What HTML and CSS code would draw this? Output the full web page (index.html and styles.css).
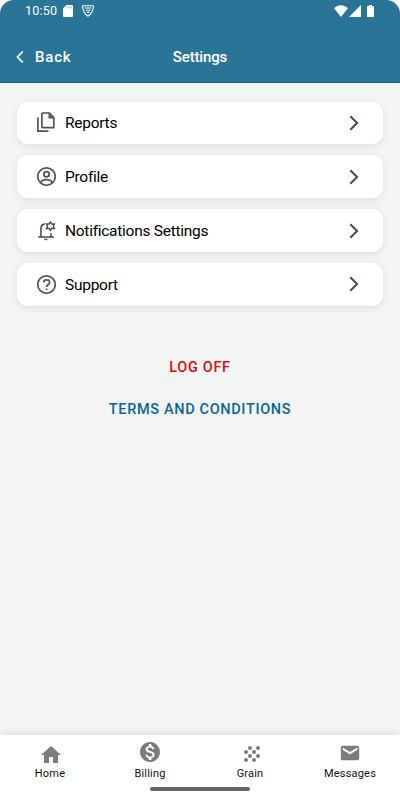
FILE: index.html
```html
<!DOCTYPE html>
<html lang="en">
<head>
    <meta charset="UTF-8">
    <meta name="viewport" content="width=device-width, initial-scale=1.0">
    <title>Settings</title>
    <link rel="stylesheet" href="styles.css">
</head>

<body>
    <div class="screen">
        <header>
            <div class="status-bar">
                <span class="time">10:50</span>
                <svg class="sd-card" width="10" height="12" viewBox="0 0 10 12">
                    <path d="M3.6 0H9a1 1 0 0 1 1 1v10a1 1 0 0 1-1 1H1a1 1 0 0 1-1-1V3.600z" fill="#fff"/>
                    <path d="M4 1.400v2M6 1.400v2M8 1.400v2" stroke="#8fb3c6" stroke-width="1"/>
                </svg>
                <svg class="shield" width="12" height="12" viewBox="0 0 12 12" fill="none" stroke="#fff">
                    <path d="M1.400.8h9.200q.9 0 .8.900C11 5.300 9.300 9 6 11.300 2.700 9 1 5.300.6 1.700.5.800.8.800 1.400.8z" stroke-width="1.100"/>
                    <path d="M2.800 3h6.400M3.800 5.200h4.600M5 7.400h2.400" stroke-width="1.100"/>
                </svg>
                <div class="status-right">
                    <svg width="14" height="12" viewBox="0 0 14 12"><path d="M0 3.200C3.800-.9 10.200-.9 14 3.200L7 12z" fill="#fff"/></svg>
                    <svg class="signal" width="12" height="12" viewBox="0 0 12 12"><path d="M12 0v12H0z" fill="#fff"/></svg>
                    <svg class="battery" width="7" height="12" viewBox="0 0 7 12"><path d="M2 0h3v1h1.300q.7 0 .7.700v9.600q0 .7-.7.700H.7q-.7 0-.7-.7V1.700Q0 1 .7 1H2z" fill="#fff"/></svg>
                </div>
            </div>
            <div class="title-bar">
                <a class="back" href="#">
                    <svg width="8" height="12" viewBox="0 0 8 12"><path d="M6.800.6 1.400 6l5.400 5.400" fill="none" stroke="#fff" stroke-width="1.600"/></svg>
                    <span>Back</span>
                </a>
                <h1>Settings</h1>
            </div>
        </header>

        <main>
            <ul class="menu">
                <li class="menu-item">
                    <svg class="menu-icon" viewBox="0 0 21 21">
                        <path d="M6.900 1h6.600l4.300 4.500v10.200H6.900q-1 0-1-1V2q0-1 1-1zM1.900 5.500v13.600h10.600" fill="none" stroke="#50554c" stroke-width="1.700"/>
                        <path d="M12.500 1v5.600h5.300z"/>
                    </svg>
                    <span>Reports</span>
                    <svg class="chevron" viewBox="0 0 10 16"><path d="m1.300 1.200 6.800 6.800-6.800 6.800"/></svg>
                </li>
                <li class="menu-item">
                    <svg class="menu-icon outline" viewBox="0 0 24 24"><circle cx="12" cy="12" r="10"/><circle cx="12" cy="9.300" r="3"/><path d="M5 18.800c1.800-2.100 4.200-3.100 7-3.100s5.200 1 7 3.100"/></svg>
                    <span>Profile</span>
                    <svg class="chevron" viewBox="0 0 10 16"><path d="m1.300 1.200 6.800 6.800-6.800 6.800"/></svg>
                </li>
                <li class="menu-item">
                    <svg class="menu-icon bell" viewBox="0 0 20 20">
                        <path d="M2 16.200h15M4.700 16V8.500c0-2.500 1.200-4.200 3.600-4.800M14.300 12.500V16" fill="none" stroke="#444b41" stroke-width="1.500"/>
                        <path d="M7.600 17.800h3.600c-.4 2-3.200 2-3.600 0z"/>
                        <path d="m13.700 1.800 1.300 2 2.500-.1-1.100 2.200 1.100 2.200-2.500-.1-1.300 2-1.300-2-2.500.1L11 5.900 9.900 3.700l2.500.1z" fill="none" stroke="#444b41" stroke-width="1.300"/>
                    </svg>
                    <span>Notifications Settings</span>
                    <svg class="chevron" viewBox="0 0 10 16"><path d="m1.300 1.200 6.800 6.800-6.800 6.800"/></svg>
                </li>
                <li class="menu-item">
                    <svg class="menu-icon outline" viewBox="0 0 24 24"><circle cx="12" cy="12" r="10"/><path d="M8.700 9.800c0-4.200 6.800-4.200 6.800-.2 0 2.600-3.400 2.700-3.400 5.300M12.100 16.600v2.100"/></svg>
                    <span>Support</span>
                    <svg class="chevron" viewBox="0 0 10 16"><path d="m1.300 1.200 6.800 6.800-6.800 6.800"/></svg>
                </li>
            </ul>

            <div class="links">
                <a class="log-off" href="#">LOG OFF</a>
                <a class="terms" href="#">TERMS AND CONDITIONS</a>
            </div>
        </main>

        <nav>
            <a href="#">
                <svg class="home" viewBox="0 0 24 24"><path d="M10 20v-6h4v6h5v-8h3L12 3 2 12h3v8z"/></svg>
                <span>Home</span>
            </a>
            <a href="#">
                <svg class="billing" viewBox="0 0 24 24"><path d="M12 2C6.480 2 2 6.480 2 12s4.480 10 10 10 10-4.480 10-10S17.520 2 12 2zm1.410 16.090V20h-2.670v-1.930c-1.710-.36-3.160-1.460-3.270-3.400h1.960c.1 1.050.82 1.870 2.650 1.870 1.960 0 2.400-.98 2.400-1.590 0-.83-.44-1.610-2.670-2.140-2.480-.6-4.180-1.620-4.180-3.670 0-1.720 1.390-2.840 3.110-3.210V4h2.670v1.950c1.860.45 2.790 1.860 2.850 3.390H14.300c-.05-1.110-.64-1.870-2.220-1.870-1.500 0-2.400.68-2.400 1.640 0 .84.65 1.390 2.670 1.910s4.180 1.390 4.180 3.910c-.01 1.830-1.380 2.830-3.120 3.160z"/></svg>
                <span>Billing</span>
            </a>
            <a href="#">
                <svg class="grain" viewBox="0 0 24 24">
                    <circle cx="14" cy="6" r="2"/><circle cx="22" cy="6" r="2"/>
                    <circle cx="10" cy="10" r="2"/><circle cx="18" cy="10" r="2"/>
                    <circle cx="14" cy="14" r="2"/><circle cx="22" cy="14" r="2"/>
                    <circle cx="10" cy="18" r="2"/><circle cx="18" cy="18" r="2"/>
                </svg>
                <span>Grain</span>
            </a>
            <a href="#">
                <svg class="messages" viewBox="0 0 24 24"><path d="M20 4H4c-1.100 0-2 .9-2 2v12c0 1.100.9 2 2 2h16c1.100 0 2-.9 2-2V6c0-1.100-.9-2-2-2zm0 4.500-8 5-8-5V6l8 5 8-5z"/></svg>
                <span>Messages</span>
            </a>
        </nav>
        <div class="home-bar"></div>
    </div>
</body>
</html>
```
FILE: styles.css
```css
body {
    margin: 0;
    background-color: #fff;
    font-family: Roboto, sans-serif;
}

a {
    text-decoration: none;
    color: inherit;
}

svg {
    display: block;
    flex-shrink: 0;
    overflow: visible;
}

.screen {
    position: relative;
    display: flex;
    flex-direction: column;
    width: 400px;
    height: 800px;
    overflow: hidden;
    border-radius: 14px 14px 0 0;
    background-color: #f3f5f5;
}

header {
    height: 83px;
    box-sizing: border-box;
    background-color: #287597;
    border-bottom: 1px solid #0c658d;
    color: #fff;
}

.status-bar {
    display: flex;
    align-items: center;
    height: 22px;
    padding: 0 26px 0 25px;
}

.time {
    width: 38px;
    margin-top: -1px;
    font-size: 12.5px;
    letter-spacing: 0.2px;
}

.shield {
    margin-left: 9px;
}

.status-right {
    display: flex;
    margin-left: auto;
}

.signal {
    margin-left: 1px;
}

.battery {
    margin-left: 6px;
}

.title-bar {
    display: grid;
    grid-template-columns: 1fr auto 1fr;
    align-items: center;
    height: 20px;
    margin-top: 25px;
    padding: 0 16px;
}

.back {
    display: flex;
    align-items: center;
    gap: 11px;
    font-size: 15px;
    line-height: 20px;
    font-weight: 500;
    letter-spacing: 0.8px;
}

h1 {
    margin: 0;
    font-size: 15px;
    line-height: 20px;
    font-weight: 500;
    letter-spacing: -0.15px;
}

main {
    flex: 1;
    padding: 18.7px 17px 0;
}

.menu {
    display: flex;
    flex-direction: column;
    gap: 11.2px;
    margin: 0;
    padding: 0;
    list-style: none;
}

.menu-item {
    display: flex;
    align-items: center;
    height: 42.6px;
    padding: 0 24.5px 0 19px;
    box-sizing: border-box;
    border-radius: 11px;
    background-color: #fff;
    box-shadow: 0 2px 8px rgba(0, 0, 0, 0.1);
    font-size: 15.5px;
    line-height: 20px;
    letter-spacing: -0.27px;
    color: #000;
}

.menu-item span {
    padding-top: 1px;
}

.menu-icon {
    width: 21px;
    height: 21px;
    margin-right: 8px;
    fill: #50554c;
}

.outline {
    fill: none;
    stroke: #50554c;
    stroke-width: 2;
}

.chevron {
    width: 10px;
    height: 16px;
    margin-left: auto;
    fill: none;
    stroke: #414d5b;
    stroke-width: 2;
}

.links {
    display: flex;
    flex-direction: column;
    align-items: center;
    gap: 22px;
    margin-top: 52px;
    font-size: 14.5px;
    line-height: 20px;
    font-weight: 500;
    letter-spacing: 0.65px;
}

.log-off {
    color: #de0a12;
}

.terms {
    color: #0b6590;
}

nav {
    display: grid;
    grid-template-columns: repeat(4, 1fr);
    height: 65px;
    background-color: #fff;
    box-shadow: 0 0 12px rgba(0, 0, 0, 0.12);
}

nav a {
    display: flex;
    flex-direction: column;
    align-items: center;
    padding-top: 8px;
    box-sizing: border-box;
    font-size: 11px;
    line-height: 14px;
    letter-spacing: 0.2px;
    color: #111;
}

nav svg {
    width: 24px;
    height: 24px;
    fill: #7c7c7c;
}

.home {
    margin: -0.5px 0 0.5px 2px;
}

.billing {
    margin-top: -3px;
    margin-bottom: 3px;
    margin-left: -1px;
}

.grain {
    margin: -1px 0 1px -4px;
}

nav .messages {
    width: 22px;
    height: 22px;
    margin: -1px 0 3px;
}

.home-bar {
    position: absolute;
    left: 150px;
    bottom: 9px;
    width: 100px;
    height: 4px;
    border-radius: 2px;
    background-color: #666;
}
```
